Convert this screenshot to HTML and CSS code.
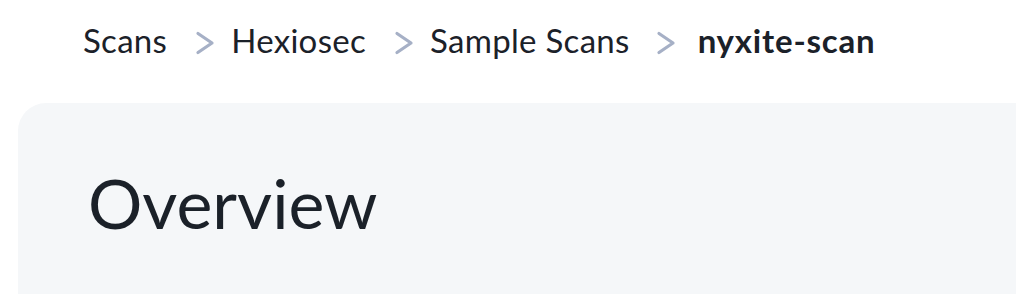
FILE: index.html
```html
<!DOCTYPE html>
<html lang="en">
<head>
    <title>nyxite-scan</title>
    <meta charset="UTF-8">
    <link rel="stylesheet" href="styles.css">
</head>
<body>
    <nav class="crumbs">
        <a class="crumb" href="#">Scans</a>
        <svg class="sep" viewBox="0 0 20 24"><path d="M3 2.5 L17 12 L3 21.5"/></svg>
        <a class="crumb" href="#">Hexiosec</a>
        <svg class="sep" viewBox="0 0 20 24"><path d="M3 2.5 L17 12 L3 21.5"/></svg>
        <a class="crumb" href="#">Sample Scans</a>
        <svg class="sep" viewBox="0 0 20 24"><path d="M3 2.5 L17 12 L3 21.5"/></svg>
        <span class="crumb current">nyxite-scan</span>
    </nav>
    <main class="panel">
        <h1>Overview</h1>
    </main>
</body>
</html>
```

FILE: styles.css
```css
body {
    margin: 0;
    background: #ffffff;
    font-family: Lato, "Noto Sans", sans-serif;
    color: #1b2129;
}

.crumbs {
    display: flex;
    align-items: center;
    padding: 20px 0 0 83px;
    height: 40px;
}

.crumb {
    font-size: 33px;
    line-height: 40px;
    letter-spacing: 0.3px;
    color: #1b2129;
    text-decoration: none;
}

.crumb.current {
    font-weight: 700;
    letter-spacing: 0.8px;
}

.sep {
    flex-shrink: 0;
    width: 20px;
    height: 24px;
    margin: 6px 16px 0 28px;
    fill: none;
    stroke: #a6b0c6;
    stroke-width: 3.2;
    stroke-linecap: round;
    stroke-linejoin: round;
}

.sep:last-of-type {
    margin-left: 26px;
    margin-right: 22px;
}

.panel {
    box-sizing: border-box;
    min-height: calc(100vh - 103px);
    margin: 43px 0 0 18px;
    padding: 59px 0 0 70px;
    background: #f5f7f9;
    border-radius: 28px 0 0 0;
}

h1 {
    margin: 0;
    font-size: 68px;
    font-weight: 400;
    line-height: 1.2;
}
```
